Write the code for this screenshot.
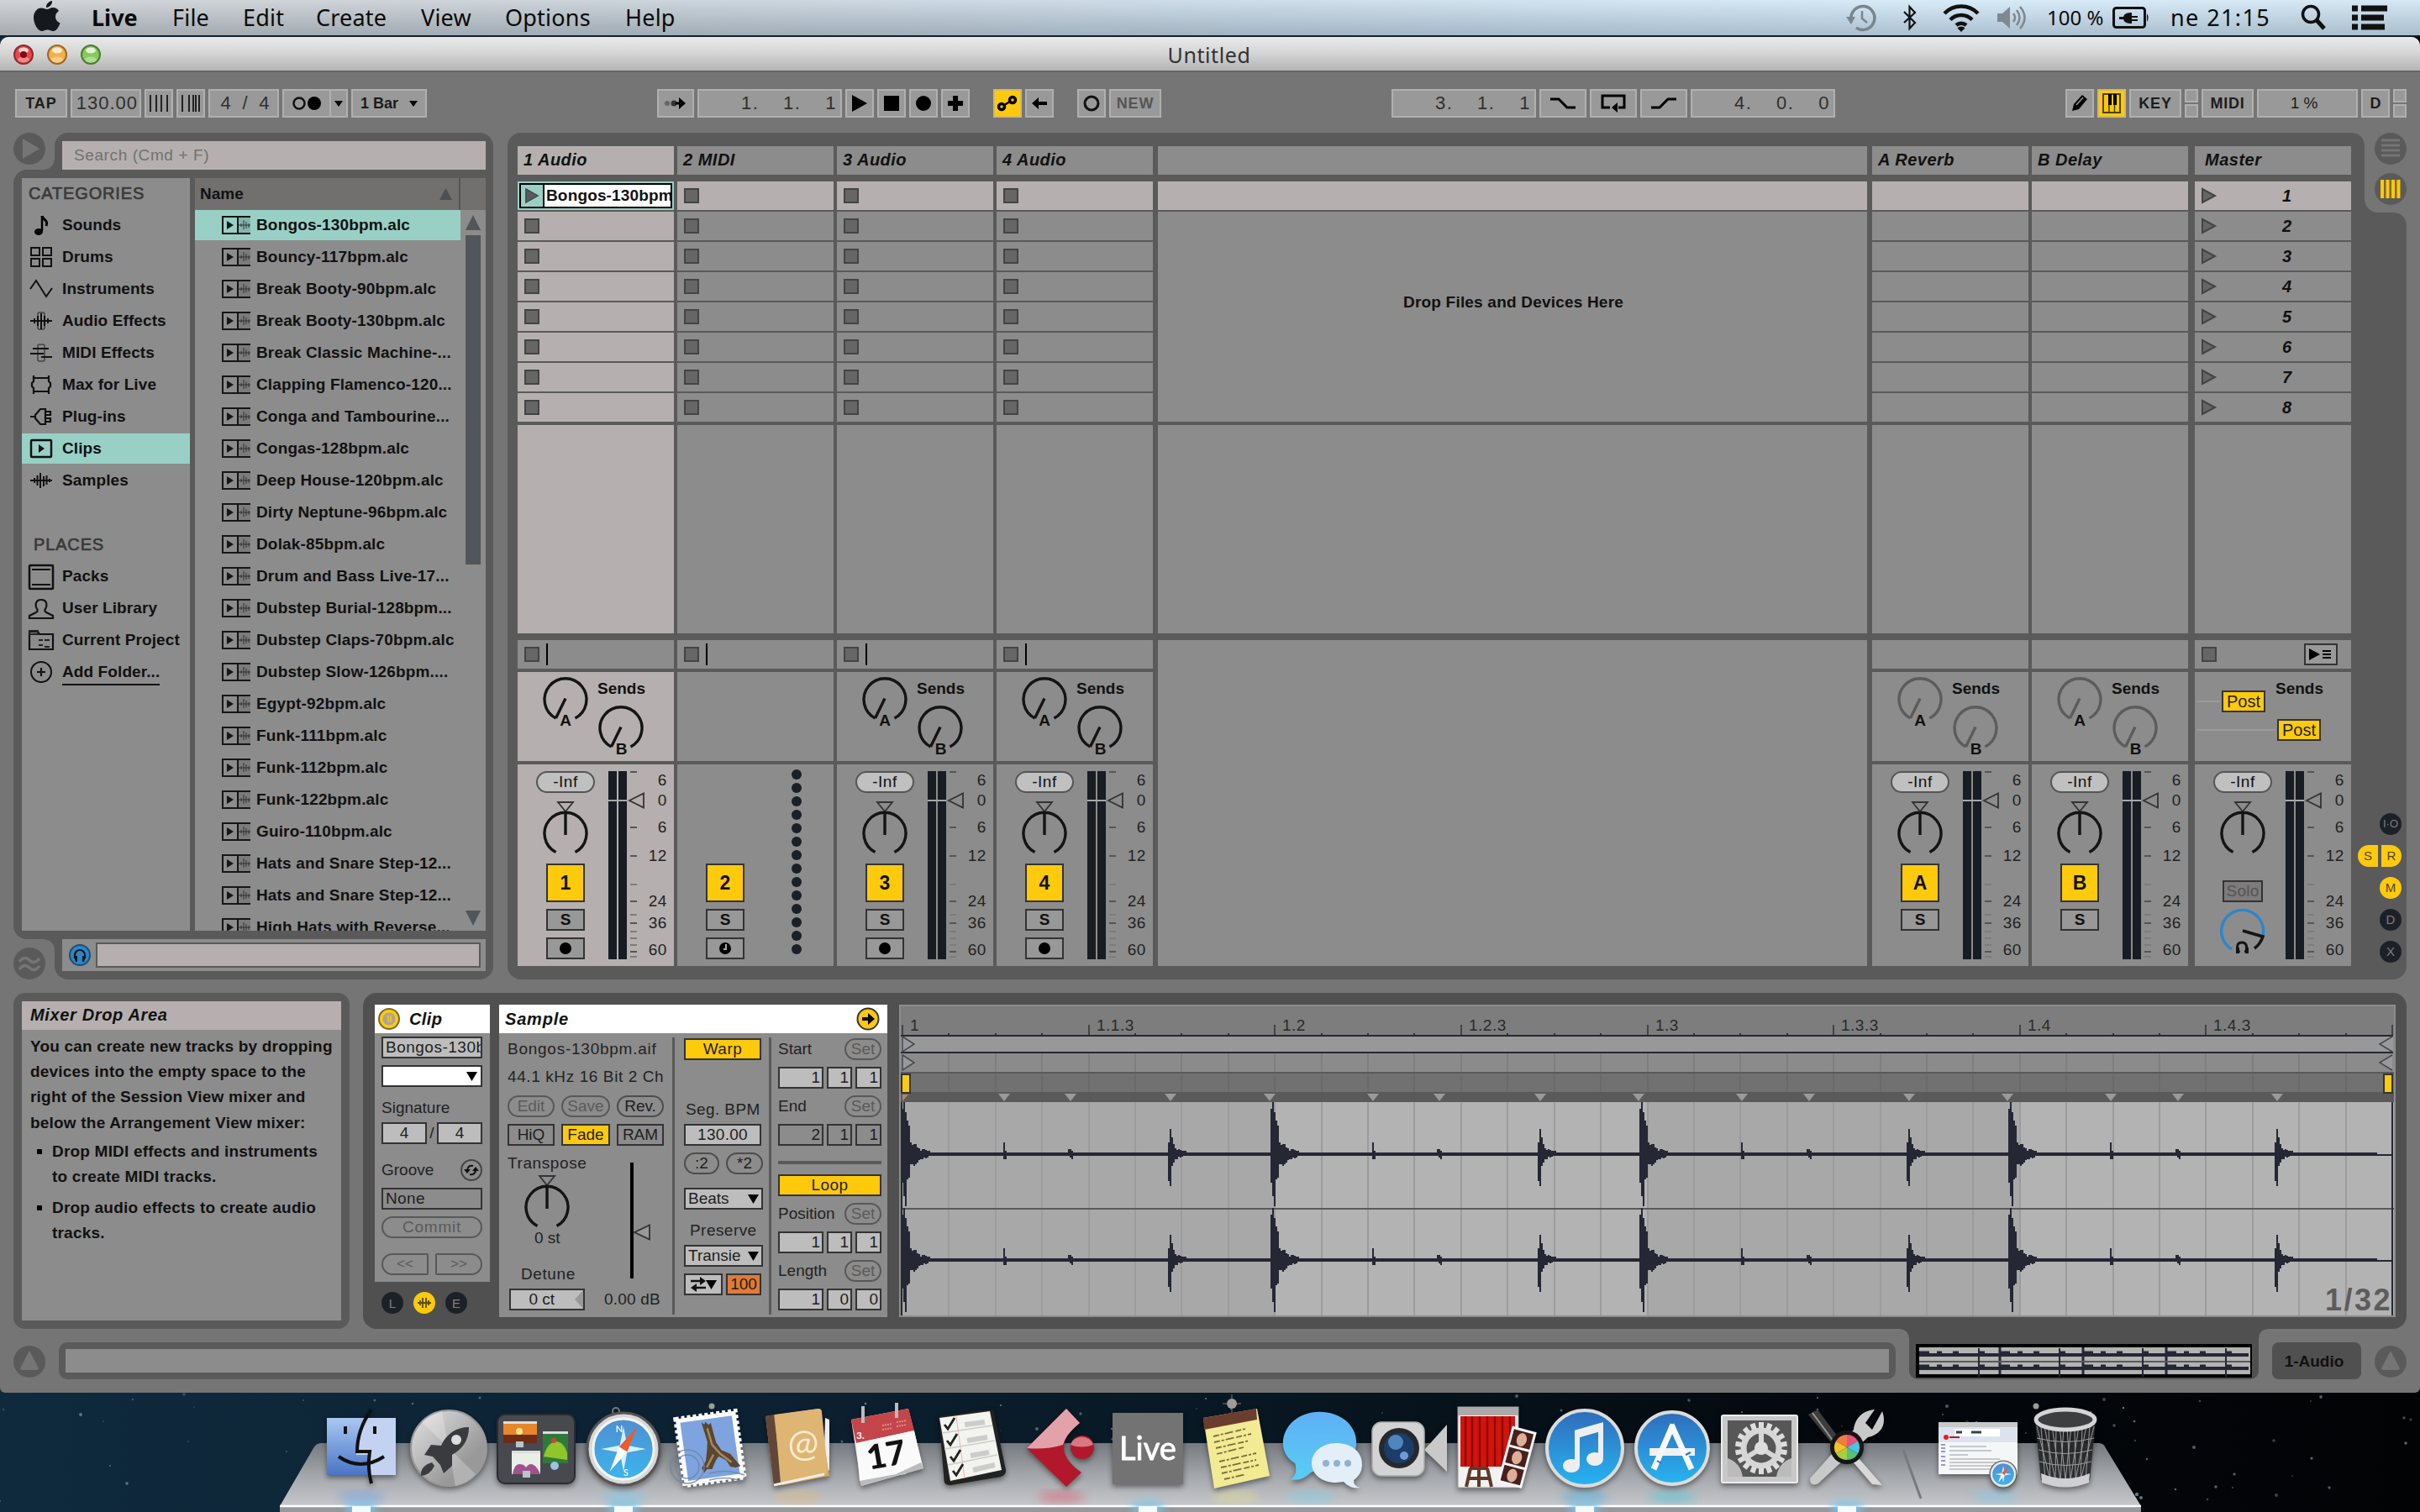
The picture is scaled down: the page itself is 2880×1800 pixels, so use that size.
<!DOCTYPE html>
<html lang="en">
<head>
  <meta charset="UTF-8">
  <meta name="viewport" content="width=device-width, initial-scale=1.0">
  <title>Untitled</title>
  <style>
    html, body {
      margin: 0;
      width: 2880px;
      height: 1800px;
      overflow: hidden;
      background: #050a10;
      font-family: "Liberation Sans", Arial, sans-serif;
      color: #111;
    }
  </style>
</head>
<body>
  <mac-desktop>
    <mac-menubar></mac-menubar>
    <live-window>
      <live-toolbar></live-toolbar>
      <live-main></live-main>
      <live-detail></live-detail>
      <live-status></live-status>
    </live-window>
    <mac-dock></mac-dock>
  </mac-desktop>

  <script>
    // Rules every shadow root starts with
    const BASE = `
      :host, * { box-sizing: border-box; }
      svg { display: block; flex: none; overflow: visible; }
      span, b { white-space: nowrap; }
    `;

    class LiveElement extends HTMLElement {
      constructor() {
        super();
        this.attachShadow({ mode: 'open' });
      }
      connectedCallback() {
        this.shadowRoot.innerHTML = `<style>${BASE}${this.css()}</style>${this.html()}`;
      }
      css() { return ':host { display: block; }'; }
      html() { return '<slot></slot>'; }
    }

    const svg = (w, h, body, box) =>
      `<svg width="${w}" height="${h}" viewBox="${box || `0 0 ${w} ${h}`}" fill="none">${body}</svg>`;

    /* ---------- desktop ---------- */

    class MacDesktop extends LiveElement {
      css() {
        return `
          :host {
            display: flex;
            flex-direction: column;
            width: 2880px;
            height: 1800px;
            overflow: hidden;
            background: linear-gradient(90deg, #0f2a3d 0, #0c2132 900px, #081722 1500px, #04080d 2200px, #020305 2880px);
          }`;
      }
    }

    class MacMenubar extends LiveElement {
      css() {
        return `
          :host {
            display: flex;
            align-items: center;
            height: 44px;
            flex: none;
            border-bottom: 2px solid #10202c;
            background: linear-gradient(rgba(255,255,255,.25), rgba(90,100,110,.28)),
              linear-gradient(90deg, #c2c6ca 0, #bcc6cf 700px, #bed3e4 1500px, #cbe4f6 2300px, #c8e0f0 2880px);
            font: 27px "Noto Sans", "Open Sans", sans-serif;
            color: #0a0a0a;
          }
          .apple { margin: 0 37px 4px 40px; }
          span { flex: none; line-height: 40px; }
          .right { display: flex; align-items: center; margin-left: auto; }
        `;
      }
      html() {
        const items = [['Live', 96], ['File', 84], ['Edit', 87], ['Create', 125], ['View', 100], ['Options', 143], ['Help', 70]];
        return `
          <div class="apple">${svg(32, 38, `<path d="M22 1c.5 4-3 8-7 8-.4-4 3-7.500 7-8zM16 11c2 0 4-2 7-2s5.500 1.500 7 4c-6 4-5 12 1.500 14.500C30 32 27 37 23.500 37c-3 0-3.500-1.500-7-1.500S12.500 37 9.500 37C5 37 0 28 0 21 0 14 4.500 9.500 9 9.500c3 0 5 1.500 7 1.500z" fill="#15191d"/>`)}</div>
          ${items.map(([t, w], i) => `<span style="width:${w}px;${i ? 'letter-spacing:.2px;' : 'font-weight:700;'}">${t}</span>`).join('')}
          <div class="right">
            ${svg(36, 36, `<path d="M6 20A14 14 0 1 1 12 30" stroke="#7b858e" stroke-width="3.500"/><path d="M0 17h11l-5 9z" fill="#7b858e"/><path d="M19 10v9l6 5" stroke="#7b858e" stroke-width="2.500"/>`)}
            <i style="width:32px"></i>
            ${svg(16, 30, `<path d="M1 8l13 13-6.500 7V2L14 9 1 21" stroke="#111" stroke-width="2.200"/>`)}
            <i style="width:31px"></i>
            ${svg(44, 34, `<g stroke="#111" stroke-width="4.500"><path d="M2 12a28 28 0 0 1 40 0"/><path d="M9 19.500a18 18 0 0 1 26 0"/><path d="M16 26a9 9 0 0 1 12 0"/></g><path d="M22 34l-4.500-4.500a6 6 0 0 1 9 0z" fill="#111"/>`)}
            <i style="width:20px"></i>
            ${svg(36, 32, `<path d="M1 11h6l9-8v26l-9-8H1z" fill="#7f8990"/><g stroke="#7f8990" stroke-width="2.600"><path d="M20 11q4 5 0 10"/><path d="M24 7q7 9 0 18"/><path d="M28 3q11 13 0 26"/></g>`)}
            <i style="width:24px"></i>
            <span style="width:78px;font-size:24px">100 %</span>
            ${svg(44, 26, `<rect x="1.500" y="1.500" width="37" height="23" rx="3" stroke="#111" stroke-width="3"/><path d="M41 8q3 5 0 10z" fill="#111"/><path d="M8 12h5c1-4 5-5 10-5v4h7v2h-7v2h7v2h-7v3c-5 0-9-1-10-5H8z" fill="#111"/>`)}
            <i style="width:25px"></i>
            <span style="width:155px;letter-spacing:1.400px">ne 21:15</span>
            ${svg(30, 32, `<circle cx="12" cy="12" r="9.500" stroke="#111" stroke-width="3.500"/><path d="M19 19l9 10" stroke="#111" stroke-width="5"/>`)}
            <i style="width:31px"></i>
            ${svg(42, 30, `<path d="M0 4h7M11 4h31M0 15h7M11 15h27M0 26h7M11 26h28" stroke="#111" stroke-width="7"/>`)}
            <i style="width:39px"></i>
          </div>`;
      }
    }

    class LiveWindow extends LiveElement {
      css() {
        return `
          :host {
            display: flex;
            flex-direction: column;
            height: 1614px;
            flex: none;
            background: #757575;
            border-radius: 10px 10px 6px 6px;
            overflow: hidden;
          }
          header {
            display: grid;
            grid-template-columns: 1fr auto 1fr;
            align-items: center;
            height: 42px;
            flex: none;
            padding: 2px 18px 0 16px;
            background: linear-gradient(#eaeaea, #d4d4d4 50%, #b4b4b4);
            border-bottom: 2px solid #666;
            font: 25px "Noto Sans", sans-serif;
            color: #333;
          }
          .lights { display: flex; gap: 16px; }
        `;
      }
      html() {
        const light = (a, b, dot) => svg(24, 24, `<circle cx="12" cy="12" r="11" fill="${a}" stroke="${b}" stroke-width="2"/><ellipse cx="12" cy="7" rx="6" ry="3.500" fill="#fff" opacity=".75"/><ellipse cx="12" cy="18" rx="7" ry="3.500" fill="#fff" opacity=".35"/>${dot ? '<circle cx="12" cy="12" r="4" fill="#7a0d10"/>' : ''}`);
        return `
          <header>
            <div class="lights">${light('#e8474c', '#8e2a2c', 1)}${light('#f5b04a', '#9a6a26')}${light('#86c95b', '#4d7c35')}</div>
            <span style="letter-spacing:.6px">Untitled</span>
          </header>
          <slot></slot>`;
      }
    }

    /* ---------- control bar ---------- */

    class ToolBox extends LiveElement {
      css() {
        return `
          :host {
            display: flex;
            align-items: center;
            justify-content: center;
            flex: none;
            width: var(--w, 34px);
            height: 34px;
            margin-right: 4px;
            border: 2px solid #b0b0b0;
            background: #999;
            font: bold 18px "Liberation Sans", sans-serif;
            white-space: pre;
            color: #1c1c1c;
          }
          :host([on]) { background: #ffc90c; border-color: #d8b85a; }
          :host([num]) { font: 22px "Liberation Sans", sans-serif; color: #303030; justify-content: flex-end; padding-right: 4px; }
        `;
      }
    }

    class LiveToolbar extends LiveElement {
      css() {
        return `
          :host { display: flex; height: 72px; flex: none; padding: 20px 0 0 18px; }
          .pair { display: flex; flex-direction: column; gap: 2px; width: 16px; margin-right: 4px; }
          .pair i { height: 16px; border: 2px solid #b0b0b0; background: #999; }
        `;
      }
      html() {
        const box = (w, body, attrs = '', style = '') => `<tool-box ${attrs} style="--w:${w}px;${style}">${body}</tool-box>`;
        const bars = xs => svg(24, 24, xs.map(x => `<path d="M${x} 2v20" stroke="#222" stroke-width="2"/>`).join(''));
        const down = `<path d="M0 0h10l-5 7z" fill="#000"/>`;
        const pair = '<div class="pair"><i></i><i></i></div>';
        return `
          ${box(62, 'TAP', '', 'letter-spacing:.9px')}
          ${box(84, '130.00', 'num', 'letter-spacing:1px;padding-right:2px')}
          ${box(34, bars([2, 9, 15, 22]))}
          ${box(34, bars([2, 10, 15, 18, 22]))}
          ${box(84, '4  /  4', 'num', 'padding-right:9px;letter-spacing:.5px')}
          ${box(58, svg(34, 18, '<circle cx="8" cy="9" r="6.500" stroke="#111" stroke-width="2.500"/><circle cx="26" cy="9" r="8" fill="#000"/>'), '', 'margin-right:-2px')}
          ${box(22, svg(10, 7, down))}
          ${box(90, '1 Bar' + svg(10, 7, down), '', 'gap:13px')}
          ${box(44, svg(26, 16, '<circle cx="3" cy="8" r="3" fill="#666"/><circle cx="11" cy="8" r="3.500" fill="#333"/><path d="M13 6.500h4V1l8 7-8 7V9.500h-4z" fill="#000"/>'), '', 'margin-left:270px')}
          ${box(172, '1.   1.   1', 'num', 'word-spacing:2px;letter-spacing:1.500px')}
          ${box(34, svg(20, 20, '<path d="M1 0l18 10L1 20z" fill="#000"/>'))}
          ${box(34, svg(18, 18, '<path d="M0 0h18v18H0z" fill="#000"/>'))}
          ${box(34, svg(18, 18, '<circle cx="9" cy="9" r="9" fill="#000"/>'))}
          ${box(34, svg(18, 18, '<path d="M6 0h6v6h6v6h-6v6H6v-6H0V6h6z" fill="#000"/>'))}
          ${box(34, svg(24, 18, '<circle cx="5" cy="13" r="3.500" stroke="#000" stroke-width="3.500"/><circle cx="18" cy="5" r="3.500" stroke="#000" stroke-width="3.500"/><path d="M8 11l7-4" stroke="#000" stroke-width="2.500"/>'), 'on', 'margin-left:24px')}
          ${box(34, svg(18, 14, '<path d="M0 7l8-7v5h10v4H8v5z" fill="#000"/>'))}
          ${box(34, svg(20, 20, '<circle cx="10" cy="10" r="8" stroke="#111" stroke-width="3"/>'), '', 'margin-left:24px')}
          ${box(62, 'NEW', '', 'color:#555;letter-spacing:.8px')}
          ${box(172, '3.   1.   1', 'num', 'margin-left:270px;word-spacing:2px;letter-spacing:1.500px')}
          ${box(56, svg(30, 14, '<path d="M0 2h10l10 10h10" stroke="#000" stroke-width="3"/>'))}
          ${box(56, svg(28, 22, '<path d="M10 16H1V2h26v14h-7" stroke="#000" stroke-width="3"/><path d="M12 16l7-6v12z" fill="#000"/>'))}
          ${box(56, svg(30, 14, '<path d="M0 12h10L20 2h10" stroke="#000" stroke-width="3"/>'))}
          ${box(172, '4.   0.   0', 'num', 'word-spacing:2px;letter-spacing:1.500px')}
          ${box(34, svg(22, 22, '<path d="M2 20l2-8L14 1l6 5-10 12z" fill="#000"/><path d="M7 13l8-9" stroke="#999" stroke-width="1.500"/>'), '', 'margin-left:270px')}
          ${box(34, svg(22, 24, '<rect x="1" y="1" width="20" height="22" stroke="#4d3d05" stroke-width="2"/><path d="M8 1v22M14.500 1v22" stroke="#4d3d05" stroke-width="1.500"/><path d="M7 1h4v13H7zM13 1h4v13h-4z" fill="#000"/>'), 'on')}
          ${box(62, 'KEY', '', 'letter-spacing:.8px')}
          ${pair}
          ${box(62, 'MIDI', '', 'letter-spacing:.7px')}
          ${box(120, '1 %', '', 'font-weight:400;font-size:19px;padding-right:8px')}
          ${box(34, 'D')}
          ${pair}`;
      }
    }

    /* ---------- round buttons at the window edges ---------- */

    class EdgeButton extends LiveElement {
      css() {
        return `
          :host {
            display: flex;
            align-items: center;
            justify-content: center;
            width: 38px;
            height: 38px;
            border-radius: 50%;
            flex: none;
            background: #5a5a5a;
          }`;
      }
      html() {
        const kinds = {
          play: '<path d="M11 7l20 12-20 12z" fill="#757575"/>',
          up: '<path d="M19 6l11 21a3 3 0 0 1-2 2H10a3 3 0 0 1-2-2z" fill="#757575"/>',
          groove: '<g stroke="#757575" stroke-width="3.500"><path d="M7 17q6-8 12-2t12-2"/><path d="M7 26q6-8 12-2t12-2"/></g>',
          arrange: '<path d="M8 9h22M8 15h22M8 21h22M8 27h22" stroke="#757575" stroke-width="3"/>',
          session: '<path d="M9 8v22M15.500 8v22M22 8v22M28.500 8v22" stroke="#ffc90c" stroke-width="4"/><path d="M12.300 8v22M18.800 8v22M25.300 8v22" stroke="#8a7220" stroke-width="1.500"/>',
        };
        return svg(38, 38, kinds[this.getAttribute('kind')]);
      }
    }

    /* ---------- browser ---------- */

    const ICONS = {
      Sounds: '<path d="M15 3v18" stroke="#000" stroke-width="2.500"/><ellipse cx="11" cy="22" rx="5" ry="4" fill="#000"/><path d="M15 3c1 5 8 5 5 12" stroke="#000" stroke-width="3"/>',
      Drums: '<g stroke="#111" stroke-width="2"><rect x="2" y="3" width="10" height="9"/><rect x="16" y="3" width="10" height="9"/><rect x="2" y="16" width="10" height="9"/><rect x="16" y="16" width="10" height="9"/></g>',
      Instruments: '<path d="M1 14L8 4l12 19 7-10" stroke="#111" stroke-width="2"/>',
      'Audio Effects': '<rect x="10" y="4" width="8" height="20" rx="2" stroke="#444" stroke-width="1.500"/><path d="M1 14h26M6 11v6M10 8v12M14 5v19M18 8v12M22 11v6" stroke="#111" stroke-width="2"/>',
      'MIDI Effects': '<rect x="10" y="4" width="8" height="20" rx="2" stroke="#444" stroke-width="1.500"/><path d="M4 9h19M1 15h16M14 19h13" stroke="#111" stroke-width="2.200"/>',
      'Max for Live': '<path d="M5 6h18v4l2 2v4l-2 2v4H5v-4l-2-2v-4l2-2zM5 3v4M23 3v4M5 21v4M23 21v4" stroke="#111" stroke-width="2.200"/>',
      'Plug-ins': '<path d="M19 5h-6l-6 7v4l6 7h6zM1 14h6M19 8h6v4h-6M19 16h6v4h-6" stroke="#111" stroke-width="2.200"/>',
      Clips: '<rect x="2" y="4" width="24" height="20" rx="1" stroke="#111" stroke-width="2.500"/><path d="M11 9l7 5-7 5z" fill="#111"/>',
      Samples: '<path d="M1 14h26M6 11v6M9.500 8v12M13 5v18M17 9v12M20.500 8v11M24 12v4" stroke="#111" stroke-width="2"/>',
      Packs: '<rect x="0" y="1" width="28" height="28" rx="1" stroke="#111" stroke-width="2.500"/><path d="M3 6h22M3 24h22" stroke="#111" stroke-width="2"/>',
      'User Library': '<path d="M0 26v-3l8-4c2-1 2-3 1-4-2-3-3-11 5-11s7 8 5 11c-1 1-1 3 1 4l8 4v3z" stroke="#111" stroke-width="2.200"/>',
      'Current Project': '<path d="M0 25V4h10l2 3h16v18z" stroke="#111" stroke-width="2.200"/><path d="M0 3h10v4H0zM11 14h5M18 14h6M11 20h5M18 22h6" stroke="#222" stroke-width="2"/>',
      'Add Folder...': '<circle cx="14" cy="14" r="12" stroke="#111" stroke-width="2"/><path d="M14 9v10M9 14h10" stroke="#111" stroke-width="2.200"/>',
    };

    class BrowserRow extends LiveElement {
      css() {
        return `
          :host { display: flex; align-items: center; height: 36px; margin-bottom: 2px; flex: none; gap: 11px; padding-left: 9px; letter-spacing: .1px; }
          :host([selected]) { background: #98d0c6; }
          :host([file]) { padding-left: 32px; gap: 7px; width: 316px; letter-spacing: .15px; }
        `;
      }
      html() {
        const name = this.getAttribute('name');
        const icon = this.hasAttribute('file')
          ? svg(34, 22, '<path d="M19 1h15v20H19z" fill="#000" opacity=".12"/><path d="M34 1H1v20h33M19 1v20" stroke="#161616" stroke-width="2"/><path d="M6 6l8 5-8 5z" fill="#161616"/><path d="M20 11h14M23 9v4M26 5v11M29 7v8M32 9v5" stroke="#333" stroke-width="1"/>')
          : svg(28, 28, ICONS[name]);
        const line = name === 'Add Folder...' ? 'border-bottom:2px solid #111;padding-bottom:3px;margin-top:5px;' : '';
        return `${icon}<span style="${line}">${name}</span>`;
      }
    }

    class LiveBrowser extends LiveElement {
      css() {
        return `
          :host { display: flex; flex-direction: column; width: 571px; height: 1008px; flex: none; font: bold 19px "Liberation Sans", sans-serif; }
          .end { display: flex; justify-content: space-between; }
          .cap { width: 522px; background: #5a5a5a; padding: 0 9px; position: relative; }
          .top .cap { height: 44px; padding-top: 10px; border-radius: 16px 16px 0 0; }
          .bottom .cap { height: 48px; border-radius: 0 0 16px 16px; }
          .cap::before { content: ""; position: absolute; left: -12px; width: 12px; height: 12px; }
          .top .cap::before { bottom: 0; background: radial-gradient(circle at 0 0, #0000 11px, #5a5a5a 12px); }
          .bottom .cap::before { top: 0; background: radial-gradient(circle at 0 100%, #0000 11px, #5a5a5a 12px); }
          .search { height: 34px; line-height: 34px; padding-left: 14px; background: #b5b0af; color: #707070; font-weight: 400; font-size: 19px; letter-spacing: .6px; }
          .mid { display: flex; gap: 6px; height: 916px; padding: 10px 9px 10px 10px; background: #5a5a5a; border-radius: 16px 0 0 16px; }
          .cats { width: 200px; background: #8c8c8c; overflow: hidden; }
          h3 { margin: 0; font: 20px/37px "Liberation Sans", sans-serif; color: #3a3a3a; letter-spacing: .85px; padding-left: 8px; height: 38px; -webkit-text-stroke: .7px #3a3a3a; }
          .files { width: 346px; background: #8c8c8c; display: flex; flex-direction: column; overflow: hidden; }
          .head { display: flex; align-items: center; height: 38px; flex: none; background: #71706f; padding-left: 6px; }
          .head i { margin-left: auto; display: flex; align-items: center; width: 32px; height: 38px; border-right: 2px solid #555; margin-right: 30px; padding-left: 7px; }
          .body { display: flex; flex: 1; min-height: 0; }
          .scroll { width: 18px; margin-left: 6px; display: flex; flex-direction: column; padding: 6px 0; }
          .thumb { width: 18px; height: 392px; margin: 6px 0 auto; background: #50565a; }
          .preview { display: flex; align-items: center; gap: 6px; width: 504px; height: 38px; background: #8c8c8c; padding: 0 6px 0 8px; }
          .wave { flex: 1; height: 30px; background: #b5b0af; border: 2px solid #5a5a5a; }
        `;
      }
      html() {
        const cats = ['Sounds', 'Drums', 'Instruments', 'Audio Effects', 'MIDI Effects', 'Max for Live', 'Plug-ins', 'Clips', 'Samples'];
        const places = ['Packs', 'User Library', 'Current Project', 'Add Folder...'];
        const files = ['Bongos-130bpm.alc', 'Bouncy-117bpm.alc', 'Break Booty-90bpm.alc', 'Break Booty-130bpm.alc', 'Break Classic Machine-...',
          'Clapping Flamenco-120...', 'Conga and Tambourine...', 'Congas-128bpm.alc', 'Deep House-120bpm.alc', 'Dirty Neptune-96bpm.alc',
          'Dolak-85bpm.alc', 'Drum and Bass Live-17...', 'Dubstep Burial-128bpm...', 'Dubstep Claps-70bpm.alc', 'Dubstep Slow-126bpm....',
          'Egypt-92bpm.alc', 'Funk-111bpm.alc', 'Funk-112bpm.alc', 'Funk-122bpm.alc', 'Guiro-110bpm.alc', 'Hats and Snare Step-12...',
          'Hats and Snare Step-12...', 'High Hats with Reverse...'];
        const row = (n, a = '') => `<browser-row name="${n}" ${a}></browser-row>`;
        return `
          <div class="end top"><edge-button kind="play"></edge-button><div class="cap"><div class="search">Search (Cmd + F)</div></div></div>
          <div class="mid">
            <div class="cats">
              <h3>CATEGORIES</h3>
              ${cats.map(n => row(n, n === 'Clips' ? 'selected' : '')).join('')}
              <h3 style="margin-top:40px;padding-left:14px">PLACES</h3>
              ${places.map(n => row(n)).join('')}
            </div>
            <div class="files">
              <div class="head"><span>Name</span><i>${svg(15, 14, '<path d="M7.500 0L15 14H0z" fill="#4c5052"/>')}</i></div>
              <div class="body">
                <div>${files.map((n, i) => row(n, 'file' + (i ? '' : ' selected'))).join('')}</div>
                <div class="scroll">${svg(18, 18, '<path d="M9 0l9 18H0z" fill="#50565a"/>')}<div class="thumb"></div>${svg(18, 18, '<path d="M0 0h18L9 18z" fill="#50565a"/>')}</div>
              </div>
            </div>
          </div>
          <div class="end bottom" style="align-items:flex-end"><edge-button kind="groove"></edge-button><div class="cap"><div class="preview">
            ${svg(26, 26, '<circle cx="13" cy="13" r="12" fill="#2b86c9" stroke="#1c4f78" stroke-width="2"/><path d="M7 17v-4a6 6 0 0 1 12 0v4" stroke="#111" stroke-width="2.200"/><path d="M6 14h4v7H8zM20 14h-4v7h2z" fill="#111"/>')}
            <div class="wave"></div></div></div></div>`;
      }
    }

    /* ---------- session view ---------- */

    const knob = (color, needle) => `
      <path d="M-11.500 22.500A25 25 0 1 1 11.500 22.500" stroke="${color}" stroke-width="3.400"/>
      <path d="${needle}" stroke="${color}" stroke-width="3.400"/>`;

    class TrackMeter extends LiveElement {
      html() {
        const tick = (y, c) => `<path d="M26 ${y}h8" stroke="${c}" stroke-width="2"/>`;
        const label = (t, y) => `<text x="69.500" y="${y + 6}" text-anchor="end" font-family="Liberation Sans" font-weight="400" font-size="19" letter-spacing=".3" fill="#222">${t}</text>`;
        return svg(78, 240, `
          <path d="M0 8h10v224H0zM12 8h10v224H12z" fill="#181d24"/>
          <path d="M0 43h22" stroke="#a8a8a8" stroke-width="2"/>
          <path d="M25 43l17-8.500v17z" stroke="#333" stroke-width="1.800"/>
          ${[9, 75, 109, 163, 189, 223].map(y => tick(y, '#555')).join('')}
          ${[143, 179, 199, 207, 215, 229].map(y => tick(y, '#7c7c7c')).join('')}
          ${[['6', 19], ['0', 43], ['6', 75], ['12', 109], ['24', 163], ['36', 189], ['60', 221]].map(l => label(...l)).join('')}`);
      }
    }

    class TrackStrip extends LiveElement {
      css() {
        return `
          :host { display: flex; flex-direction: column; width: 186px; flex: none; font: bold 18px "Liberation Sans", sans-serif; --bg: #8c8c8c; }
          :host([selected]) { --bg: #b5b0af; }
          :host([kind="master"]) .name { padding-left: 12px; }
          .name, .slot, .blank, .sends, .mixer { background: var(--bg); }
          .name { height: 34px; margin-bottom: 8px; padding-left: 7px; font: italic bold 20px/33px "Liberation Sans", sans-serif; letter-spacing: .5px; }
          .slot { display: flex; align-items: center; height: 34px; margin-bottom: 2px; padding-left: 8px; }
          .slot.first { background: #b5b0af; }
          .sq { width: 18px; height: 18px; background: #666; border: 2px solid #444; }
          .blank { height: 248px; margin: 2px 0 8px; }
          .stop { display: flex; align-items: center; height: 34px; margin-bottom: 4px; padding: 0 16px 0 8px; background: #8c8c8c; }
          .stop .bar { width: 2px; height: 26px; margin-left: 8px; background: #000; }
          .sends { height: 106px; margin-bottom: 4px; }
          .mixer { display: flex; height: 240px; }
          .ctl { display: flex; flex-direction: column; align-items: center; width: 108px; padding: 8px 0 0 6px; }
          .pill { width: 70px; height: 26px; border: 2px solid #555; border-radius: 13px; background: #c0c0c0; font: 19px/22px "Liberation Sans", sans-serif; text-align: center; letter-spacing: .5px; }
          .num { width: 46px; height: 46px; margin: 12px 0 8px; border: 2px solid #333; background: #ffc90c; font-size: 23px; line-height: 42px; text-align: center; }
          .btn { display: flex; align-items: center; justify-content: center; width: 46px; height: 26px; margin-bottom: 8px; border: 2px solid #333; background: #989898; font-size: 19px; }
          .clip { padding: 2px; background: #98d0c6; }
          .clip > div { display: flex; align-items: center; width: 182px; height: 30px; border: 2px solid #000; background: #fff; overflow: hidden; font-size: 19px; letter-spacing: .15px; }
          .clip svg { padding: 3px 4px; width: 28px; height: 26px; background: #98d0c6; border-right: 2px solid #000; margin-right: 2px; }
          .scene { justify-content: flex-start; font-style: italic; font-size: 20px; }
          .scene b { width: 80px; margin-left: 46px; text-align: center; padding-right: 5px; }
        `;
      }
      slot(i) {
        const kind = this.getAttribute('kind');
        const cls = i ? '' : 'first';
        if (kind === 'master') return `<div class="slot scene ${cls}">${svg(18, 20, '<path d="M1 2l15 8-15 8z" fill="#666" stroke="#444" stroke-width="2"/>')}<b>${i + 1}</b></div>`;
        if (kind === 'return') return `<div class="slot ${cls}"></div>`;
        if (!i && this.hasAttribute('selected')) {
          return `<div class="slot clip"><div>${svg(20, 20, '<path d="M2 1l16 9-16 9z" fill="#5a5a5a" stroke="#444" stroke-width="1.500"/>')}<span>Bongos-130bpm</span></div></div>`;
        }
        return `<div class="slot ${cls}"><div class="sq"></div></div>`;
      }
      sends() {
        const kind = this.getAttribute('kind');
        if (kind === 'midi') return '';
        const text = (t, x, y, anchor = 'middle', fs = 19) => `<text x="${x}" y="${y}" text-anchor="${anchor}" font-family="Liberation Sans" font-weight="700" font-size="${fs}" fill="#111">${t}</text>`;
        if (kind === 'master') {
          const post = (x, y) => `<rect x="${x + 1}" y="${y + 1}" width="50" height="24" fill="#ffc90c" stroke="#333" stroke-width="2"/><text x="${x + 26}" y="${y + 20}" text-anchor="middle" font-family="Liberation Sans" font-weight="400" font-size="20" fill="#222">Post</text>`;
          return svg(186, 106, `<path d="M2 35h28M2 69h94" stroke="#9b9b9b" stroke-width="2"/>${post(32, 22)}${post(98, 56)}${text('Sends', 96, 26, 'start')}`);
        }
        const c = kind === 'return' ? '#5c5c5c' : '#141414';
        const k = knob(c, 'M0-1L-11.500 22.500');
        return svg(186, 106, `<g transform="translate(57 32.500)">${k}</g><g transform="translate(123 66.500)">${k}</g>
          ${text('A', 57, 64)}${text('B', 123.500, 98)}${text('Sends', 95, 26, 'start')}`);
      }
      controls() {
        const kind = this.getAttribute('kind');
        const num = this.getAttribute('num');
        const pan = svg(60, 62, `<path d="M21 1h18l-9 11z" stroke="#333" stroke-width="1.800"/><g transform="translate(30 38)">${knob('#141414', 'M0-25V2')}</g>`);
        const vol = `<div class="pill">-Inf</div><div style="margin-top:10px">${pan}</div>`;
        const solo = '<div class="btn">S</div>';
        const rec = `<div class="btn">${svg(14, 14, '<circle cx="7" cy="7" r="7" fill="#000"/>')}</div>`;
        const midi = `<div class="btn">${svg(14, 14, '<circle cx="7" cy="7" r="7" fill="#000"/><path d="M8 2v6H5" stroke="#aaa" stroke-width="2"/>')}</div>`;
        if (kind === 'midi') return `<div style="height:98px"></div><div class="num">${num}</div>${solo}${midi}`;
        if (kind === 'return') return `${vol}<div class="num">${num}</div>${solo}`;
        if (kind === 'master') {
          return `${vol}<div class="btn" style="width:48px;margin-top:32px;color:#555;background:#7d7b7b;font-weight:400;letter-spacing:.2px">Solo</div>
            ${svg(60, 60, `<g transform="translate(30 26)"><path d="M-13 22A25 25 0 1 1 24 6" stroke="#2b86cc" stroke-width="3.400"/><path d="M0 0l24 7q-3 9-10 14" stroke="#141414" stroke-width="3.500"/><path d="M-4 26c-4-6-3-12 3-12s7 6 4 12" stroke="#141414" stroke-width="3"/><path d="M-6 20v7M5 20v7" stroke="#141414" stroke-width="4"/></g>`)}`;
        }
        return `${vol}<div class="num">${num}</div>${solo}${rec}`;
      }
      html() {
        const kind = this.getAttribute('kind');
        const stop = {
          return: '',
          master: `<div class="sq"></div>${svg(40, 26, '<rect x="1" y="1" width="38" height="24" fill="#999" stroke="#333" stroke-width="2"/><path d="M6 6l13 7-13 7zM22 8h10v2H22zM22 12h10v2H22zM22 16h10v2H22z" fill="#000"/>').replace('<svg', '<svg style="margin-left:auto"')}`,
        };
        const dots = svg(78, 240, Array.from({ length: 14 }, (_, i) => `<circle cx="34" cy="${12 + i * 16}" r="6" fill="#1a2027"/>`).join(''));
        return `
          <div class="name">${this.getAttribute('name')}</div>
          ${Array.from({ length: 8 }, (_, i) => this.slot(i)).join('')}
          <div class="blank"></div>
          <div class="stop">${kind in stop ? stop[kind] : '<div class="sq"></div><div class="bar"></div>'}</div>
          <div class="sends">${this.sends()}</div>
          <div class="mixer"><div class="ctl">${this.controls()}</div>${kind === 'midi' ? dots : '<track-meter></track-meter>'}</div>`;
      }
    }

    class DropArea extends LiveElement {
      css() {
        return `
          :host { display: flex; flex-direction: column; width: 844px; margin: 0 6px; flex: none; font: bold 19px "Liberation Sans", sans-serif; letter-spacing: .2px; }
          div { background: #8c8c8c; }
          .drop { height: 250px; margin-bottom: 4px; padding: 97px 0 0 2px; text-align: center; }
        `;
      }
      html() {
        return `
          <div style="height:34px;margin-bottom:8px"></div>
          <div style="height:34px;margin-bottom:2px;background:#b5b0af"></div>
          <div class="drop">Drop Files and Devices Here</div>
          <div style="height:248px;margin-bottom:8px"></div>
          <div style="height:388px"></div>`;
      }
    }

    class LiveSession extends LiveElement {
      css() {
        return `
          :host { display: flex; width: 2260px; height: 1008px; margin-left: 17px; padding: 16px 0 0 12px; background: #5a5a5a; border-radius: 16px; }
          .tracks { display: flex; }
          .side { display: flex; flex-direction: column; align-items: flex-end; width: 66px; margin-top: -16px; }
          .notch { position: relative; display: flex; flex-direction: column; gap: 10px; align-items: center; width: 50px; height: 95px; padding-left: 12px; background: #757575; border-radius: 0 0 0 16px; }
          .notch::before { content: ""; position: absolute; left: -14px; top: 0; width: 14px; height: 14px; background: radial-gradient(circle at 0 100%, #0000 13px, #757575 14px); }
          .notch::after { content: ""; position: absolute; right: 0; bottom: -14px; width: 14px; height: 14px; background: radial-gradient(circle at 0 100%, #0000 13px, #757575 14px); }
          .views { display: flex; flex-direction: column; align-items: flex-end; gap: 12px; padding-right: 6px; margin-top: 715px; }
          .views b { width: 26px; height: 26px; border-radius: 13px; background: #1c2128; color: #7d7d7d; font: 15px/26px "Liberation Sans", sans-serif; text-align: center; }
          .views .on { background: #ffc90c; color: #4c4634; }
          .sr { display: flex; gap: 4px; }
          .sr b { width: 24px; }
        `;
      }
      html() {
        const strip = (name, kind, num, extra = '') => `<track-strip name="${name}" kind="${kind}" num="${num}" ${extra}></track-strip>`;
        return `
          <div class="tracks">
            ${strip('1 Audio', 'audio', '1', 'selected style="margin-right:4px"')}
            ${strip('2 MIDI', 'midi', '2', 'style="margin-right:4px"')}
            ${strip('3 Audio', 'audio', '3', 'style="margin-right:4px"')}
            ${strip('4 Audio', 'audio', '4')}
            <drop-area></drop-area>
            ${strip('A Reverb', 'return', 'A', 'style="margin-right:4px"')}
            ${strip('B Delay', 'return', 'B', 'style="margin-right:8px"')}
            ${strip('Master', 'master', '')}
          </div>
          <div class="side">
            <div class="notch"><edge-button kind="arrange"></edge-button><edge-button kind="session"></edge-button></div>
            <div class="views">
              <b style="font-size:13px">I·O</b>
              <div class="sr"><b class="on" style="border-radius:13px 0 0 13px">S</b><b class="on" style="border-radius:0 13px 13px 0">R</b></div>
              <b class="on">M</b><b>D</b><b>X</b>
            </div>
          </div>`;
      }
    }

    class LiveMain extends LiveElement {
      css() { return ':host { display: flex; height: 1024px; flex: none; padding-left: 16px; }'; }
      html() { return '<live-browser></live-browser><live-session></live-session>'; }
    }

    /* ---------- detail view ---------- */

    class LiveField extends LiveElement {
      css() {
        return `
          :host {
            display: flex;
            align-items: center;
            justify-content: center;
            flex: none;
            width: var(--w, 120px);
            height: 26px;
            overflow: hidden;
            border: 2px solid #333;
            background: #bdbdbd;
            font: 19px "Liberation Sans", sans-serif;
            color: #1e1e1e;
            white-space: nowrap;
          }
          :host([flat]) { background: #8c8c8c; }
          :host([on]) { background: #ffc90c; }
          :host([pill]) { border-radius: 13px; border-color: #4c4c4c; background: #8c8c8c; }
          :host([off]) { color: #5a5a5a; border-color: #585858; }
          :host([left]) { justify-content: flex-start; padding: 0 3px; }
          :host([right]) { justify-content: flex-end; padding-right: 2px; }
        `;
      }
    }

    const field = (w, body, attrs = '', style = '') => `<live-field ${attrs} style="--w:${w}px;${style}">${body}</live-field>`;
    const arrow = svg(13, 11, '<path d="M0 0h13L6.500 11z" fill="#000"/>');

    class InfoView extends LiveElement {
      css() {
        return `
          :host { display: block; width: 400px; height: 400px; padding: 10px; border-radius: 14px; background: #5a5a5a; font: bold 19px/30.200px "Liberation Sans", sans-serif; }
          h2 { margin: 0; height: 34px; padding-left: 10px; background: #b5b0af; font: italic bold 20px/33px "Liberation Sans", sans-serif; letter-spacing: .65px; }
          .text { height: 346px; padding: 5px 0 0 10px; background: #8c8c8c; white-space: nowrap; letter-spacing: .2px; }
          ul { margin: 4px 0 0; padding: 0 0 0 26px; list-style: none; }
          li { position: relative; margin-bottom: 6.500px; }
          li::before { content: ""; position: absolute; left: -18px; top: 12px; width: 6px; height: 6px; background: #000; }
        `;
      }
      html() {
        return `
          <h2>Mixer Drop Area</h2>
          <div class="text">You can create new tracks by dropping<br>devices into the empty space to the<br>right of the Session View mixer and<br>below the Arrangement View mixer:
            <ul><li>Drop MIDI effects and instruments<br>to create MIDI tracks.</li><li>Drop audio effects to create audio<br>tracks.</li></ul>
          </div>`;
      }
    }

    class ClipBox extends LiveElement {
      css() {
        return `
          :host { display: flex; flex-direction: column; width: 137px; flex: none; font: 19px "Liberation Sans", sans-serif; color: #222; }
          header { display: flex; align-items: center; gap: 11px; height: 34px; padding-left: 4px; background: #fff; font: italic bold 20px "Liberation Sans", sans-serif; color: #111; letter-spacing: .4px; }
          .body { display: flex; flex-direction: column; height: 296px; padding: 4px 9px 0 8px; background: #8c8c8c; }
          .row { display: flex; align-items: center; justify-content: space-between; }
          .tabs { display: flex; gap: 12px; padding: 12px 0 0 8px; }
        `;
      }
      html() {
        const tab = (t, on) => svg(26, 26, `<circle cx="13" cy="13" r="13" fill="${on ? '#ffc90c' : '#1c2128'}"/>${on ? '<path d="M5 13h16M8 10v6M11 7v12M15 7v12M18 10v6" stroke="#5a4a10" stroke-width="1.800"/>' : `<text x="13" y="18.500" text-anchor="middle" font-family="Liberation Sans" font-size="15" fill="#808080">${t}</text>`}`);
        return `
          <header>${svg(26, 26, '<circle cx="13" cy="13" r="12" fill="#ffc90c" stroke="#7a6a30" stroke-width="2"/><circle cx="13" cy="13" r="7.500" fill="#aaa59a"/><path d="M12 9v8M15 9v8" stroke="#ffc90c" stroke-width="1.500"/>')}Clip</header>
          <div class="body">
            ${field(120, 'Bongos-130b', 'left', 'letter-spacing:.5px')}
            ${field(120, arrow, 'right', 'background:#fff;margin-top:8px;padding-right:4px')}
            <span style="margin:14px 0 6px;line-height:22px">Signature</span>
            <div class="row">${field(54, '4')}/${field(54, '4')}</div>
            <div class="row" style="margin:18px 0 8px;height:26px"><span>Groove</span>${svg(26, 26, '<circle cx="13" cy="13" r="12" stroke="#444" stroke-width="2"/><path d="M8 14c0-5 3-7 7-6M18 12c0 5-3 7-7 6" stroke="#111" stroke-width="2.200"/><path d="M4 12h8l-4 5zM22 14h-8l4-5z" fill="#111"/>')}</div>
            ${field(120, 'None', 'flat left', 'letter-spacing:.4px')}
            ${field(120, 'Commit', 'pill off', 'margin:8px 0 18px;letter-spacing:.8px')}
            <div class="row">${field(56, '&lt;&lt;', 'pill off', 'border-radius:13px 2px 2px 13px;font-size:17px')}${field(56, '&gt;&gt;', 'pill off', 'border-radius:2px 13px 13px 2px;font-size:17px')}</div>
          </div>
          <div class="tabs">${tab('L')}${tab('', 1)}${tab('E')}</div>`;
      }
    }

    class SampleBox extends LiveElement {
      css() {
        return `
          :host { display: flex; flex-direction: column; width: 462px; height: 372px; margin-left: 11px; flex: none; font: 19px "Liberation Sans", sans-serif; color: #222; background: #8c8c8c; }
          header { display: flex; align-items: center; justify-content: space-between; height: 34px; flex: none; padding: 0 9px 0 7px; background: #fff; font: italic bold 20px "Liberation Sans", sans-serif; color: #111; letter-spacing: .8px; }
          .cols { display: flex; flex: 1; }
          .col { display: flex; flex-direction: column; padding-top: 6px; flex: none; }
          .row { display: flex; align-items: center; justify-content: space-between; height: 26px; margin-bottom: 8px; flex: none; }
          .line { width: 3px; margin: 5px 0 3px; background: #5a5a5a; flex: none; }
          .pitch { display: flex; height: 149px; }
          .pitch .l { width: 146px; display: flex; flex-direction: column; }
        `;
      }
      html() {
        const boxes = (a, b, c, flat = '') => `<div class="row">${field(54, a, 'right ' + flat)}${field(30, b, 'right ' + flat)}${field(31, c, 'right ' + flat)}</div>`;
        const label = t => `<div class="row"><span>${t}</span>${field(44, 'Set', 'pill off', 'font-size:19px')}</div>`;
        return `
          <header>Sample${svg(28, 28, '<circle cx="14" cy="14" r="12.500" fill="#ffc90c" stroke="#333" stroke-width="2"/><path d="M7 12h7V7l8 7-8 7v-5H7z" fill="#000"/>')}</header>
          <div class="cols">
            <div class="col" style="width:206px;padding-left:10px">
              <div class="row" style="letter-spacing:.75px"><span>Bongos-130bpm.aif</span></div>
              <div class="row"><span style="letter-spacing:.6px;margin-top:-3px">44.1 kHz 16 Bit 2 Ch</span></div>
              <div class="row" style="width:186px">${field(56, 'Edit', 'pill off')}${field(58, 'Save', 'pill off')}${field(56, 'Rev.', 'pill')}</div>
              <div class="row" style="width:186px">${field(56, 'HiQ', 'flat')}${field(58, 'Fade', 'on')}${field(56, 'RAM', 'flat')}</div>
              <div class="pitch">
                <div class="l"><span style="margin-top:2px;letter-spacing:.6px">Transpose</span>
                  ${svg(94, 64, `<path d="M38 4h18l-9 11z" stroke="#333" stroke-width="1.800"/><g transform="translate(47 41)">${knob('#141414', 'M0-25V2')}</g>`)}
                  <span style="margin:5px 0 0 32px;line-height:18px">0 st</span>
                  <span style="margin:23px 0 0 16px;letter-spacing:.6px">Detune</span></div>
                ${svg(26, 140, '<path d="M2 12v138" stroke="#000" stroke-width="4"/><path d="M5 95l18-8.500v17z" fill="#999" stroke="#333" stroke-width="1.800"/>')}
              </div>
              <div class="row" style="width:180px;margin:13px 0 0 2px">${field(90, `0 ct${svg(12, 22, '<path d="M12 0v22L2 11z" fill="#999"/>')}`, '', 'gap:22px;justify-content:flex-end')}<span style="letter-spacing:.2px">0.00 dB</span></div>
            </div>
            <div class="line"></div>
            <div class="col" style="width:112px;padding-left:11px">
              <div class="row">${field(92, 'Warp', 'on', 'letter-spacing:.5px')}</div>
              <div class="row"></div>
              <div class="row" style="margin-top:4px;margin-bottom:4px"><span style="margin-left:2px;letter-spacing:.4px">Seg. BPM</span></div>
              <div class="row">${field(92, '130.00', '', 'letter-spacing:.3px')}</div>
              <div class="row" style="width:94px;margin-bottom:16px">${field(42, ':2', 'pill')}${field(44, '*2', 'pill')}</div>
              <div class="row">${field(94, 'Beats<i style="flex:1"></i>' + arrow, 'left')}</div>
              <div class="row" style="margin:4px 0 4px"><span style="margin-left:7px;letter-spacing:.45px">Preserve</span></div>
              <div class="row">${field(94, 'Transie<i style="flex:1"></i>' + arrow, 'left')}</div>
              <div class="row" style="width:92px">${field(46, svg(18, 18, '<path d="M0 5h12M6 13h12" stroke="#111" stroke-width="2.500"/><path d="M11 0l7 5-7 5zM7 8v10l-7-5z" fill="#111"/>') + arrow)}${field(42, '100', '', 'background:#e07a35')}</div>
            </div>
            <div class="line"></div>
            <div class="col" style="width:131px;padding-left:8px">
              ${label('Start')}${boxes(1, 1, 1)}
              ${label('End')}${boxes(2, 1, 1, 'flat')}
              <div style="height:4px;margin:10px 0 12px;background:#5a5a5a;flex:none"></div>
              <div class="row">${field(123, 'Loop', 'on', 'letter-spacing:.4px')}</div>
              ${label('Position')}${boxes(1, 1, 1)}
              ${label('Length')}${boxes(1, 0, 0)}
            </div>
          </div>`;
      }
    }

    // Column heights of one hit: [offset, above the zero line, below it]
    const HITS = {
      big: [[-2, 54, 34], [0, 62, 50], [2, 50, 62], [4, 40, 30], [6, 34, 28], [8, 14, 12], [10, 11, 12], [12, 12, 14], [14, 12, 12], [16, 8, 10], [18, 7, 7], [20, 4, 6], [22, 6, 6], [24, 6, 4], [26, 5, 5], [28, 4, 4], [30, 4, 2]],
      mid: [[-2, 14, 32], [0, 30, 38], [2, 20, 14], [4, 12, 10], [6, 7, 6], [8, 5, 6], [10, 6, 3], [12, 5, 4], [14, 4, 3], [16, 4, 2], [18, 4, 2]],
      small: [[0, 14, 6], [2, 4, 6]],
      tiny: [[-2, 6, 2], [0, 6, 4], [2, 4, 6]],
    };
    const BEATS = [
      ['big', 1075], ['small', 1194], ['tiny', 1273], ['mid', 1392],
      ['big', 1514], ['small', 1633], ['tiny', 1712], ['mid', 1832],
      ['big', 1953], ['small', 2072], ['tiny', 2152], ['mid', 2271],
      ['big', 2392], ['small', 2511], ['tiny', 2591], ['mid', 2709],
    ];

    class WaveEditor extends LiveElement {
      css() { return ':host { display: block; width: 1781px; height: 372px; margin-left: 14px; overflow: hidden; }'; }
      html() {
        const L = 1074, R = 2847, step = (R - L) / 32;
        const rect = (x, y, w, h, f) => `<rect x="${x}" y="${y}" width="${w}" height="${h}" fill="${f}"/>`;
        let out = rect(1070, 1196, 1781, 372, '#8c8c8c') + rect(1072, 1198, 1777, 34, '#7d7d7d')
          + rect(1072, 1232, 1776, 2, '#252735') + rect(1072, 1234, 1776, 18, '#989898') + rect(1072, 1252, 1776, 2, '#252735')
          + rect(1072, 1254, 1776, 22, '#8b8b8b') + rect(1072, 1276, 1777, 2, '#5a5a5a') + rect(1072, 1278, 1777, 22, '#717171')
          + rect(1072, 1300, 1777, 12, '#5a5a5a');
        for (let b = 0; b < 4; b++) {
          out += rect(L + b * 8 * step - (b ? 0 : 2), 1312, 8 * step + 2, 254, b % 2 ? '#b3b3b3' : '#a8a8a8');
        }
        for (let i = 0; i <= 32; i++) {
          const x = Math.round(L + i * step) - 1;
          if (i && i < 32) out += rect(x, 1254, 2, 22, '#7f7f7f') + rect(x, 1278, 2, 22, '#6a6a6a') + rect(x, 1312, 2, 254, '#9c9c9c');
          out += i % 4 ? rect(x, 1230, 2, 2, '#333') : rect(x, 1220, 2, 12, '#444');
          if (i % 4 === 0 && i < 32) {
            const beat = i / 8 + 1;
            const name = i === 0 ? '1' : Number.isInteger(beat) ? `1.${beat}` : `1.${Math.floor(beat)}.3`;
            out += `<text x="${x + 10}" y="1227" font-family="Liberation Sans" font-size="19" letter-spacing=".5" fill="#2a2a2a">${name}</text>`;
          }
        }
        out += rect(1072, 1438, 1777, 2, '#5a5a5a');
        for (const c of [1374, 1500]) {
          out += rect(1072, c - 2, 1757, 4, '#252735') + rect(2829, c, 18, 2, '#252735');
          for (const [kind, x] of BEATS) {
            out += HITS[kind].map(([d, u, w]) => rect(x + d, c - u, 2, u + w, '#252735')).join('');
          }
        }
        for (const [kind, x] of BEATS.slice(1)) {
          const t = kind === 'big' ? x - 3 : x + 1;
          out += `<path d="M${t - 7} 1302h14l-7 9z" fill="#9a9a9a"/>`;
        }
        out += rect(2846, 1312, 2, 254, '#252735') + rect(1072, 1312, 2, 254, '#252735');
        for (const y of [1243, 1265]) {
          out += `<path d="M1074 ${y - 9}l14 9-14 9zM2847 ${y - 9}l-15 9 15 9" fill="#999" stroke="#454850" stroke-width="1.500"/>`;
        }
        out += `<rect x="1073" y="1279" width="10" height="22" fill="#ffc90c" stroke="#333" stroke-width="2"/>
          <rect x="2837" y="1279" width="10" height="22" fill="#ffc90c" stroke="#333" stroke-width="2"/>
          <path d="M1074 1303h7l-7 8z" fill="#b9835c"/>
          <text x="2847" y="1560" text-anchor="end" font-family="Liberation Sans" font-weight="700" font-size="36" letter-spacing="2.500" fill="#5c5c5c">1/32</text>`;
        return svg(1781, 372, out, '1070 1196 1781 372');
      }
    }

    class LiveDetail extends LiveElement {
      css() {
        return `
          :host { display: flex; gap: 16px; height: 400px; flex: none; padding-left: 16px; }
          .clip { display: flex; align-items: flex-start; width: 2432px; height: 400px; padding: 14px 0 0 14px; border-radius: 16px; background: #505050; }
        `;
      }
      html() {
        return '<info-view></info-view><div class="clip"><clip-box></clip-box><sample-box></sample-box><wave-editor></wave-editor></div>';
      }
    }

    /* ---------- status bar ---------- */

    class LiveStatus extends LiveElement {
      css() {
        return `
          :host { display: flex; align-items: flex-start; height: 76px; flex: none; padding-left: 16px; }
          .bar { width: 2186px; height: 44px; margin: 16px 0 0 16px; padding: 8px; border-radius: 10px; background: #5a5a5a; }
          .bar div { height: 28px; background: #8c8c8c; }
          .tab { position: relative; width: 416px; height: 60px; margin-left: 16px; padding: 18px 0 0 8px; border-radius: 0 0 10px 10px; background: #505050; }
          .tab::before, .tab::after { content: ""; position: absolute; top: 0; width: 10px; height: 10px; }
          .tab::before { left: -10px; background: radial-gradient(circle at 0 100%, #0000 9px, #505050 10px); }
          .tab::after { right: -10px; background: radial-gradient(circle at 100% 100%, #0000 9px, #505050 10px); }
          .name { width: 106px; height: 44px; margin: 16px 16px 0; padding-right: 6px; border-radius: 8px; background: #505050; font: bold 19px/46px "Liberation Sans", sans-serif; text-align: center; }
          edge-button { margin-top: 20px; }
        `;
      }
      html() {
        const beats = [2284, 2380, 2479, 2578];
        const row = (c, top, bottom) => `<path d="M2284 ${c}h392" stroke="#252735" stroke-width="4"/>` + beats.map((x, i) =>
          `${i ? `<path d="M${x} ${top}V${bottom}" stroke="#252735" stroke-width="3"/>` : ''}<path d="M${x} ${c - 3}h12M${x + 21} ${c - 3}h6M${x + 40} ${c - 3}h7M${x + 70} ${c - 3}h8" stroke="#252735" stroke-width="3"/><path d="M${x + 71} ${c - 8}v18" stroke="#252735" stroke-width="2"/>`).join('');
        return `
          <edge-button kind="up"></edge-button>
          <div class="bar"><div></div></div>
          <div class="tab">${svg(400, 40, `<rect x="2280" y="1600" width="400" height="40" fill="#000"/><rect x="2284" y="1604" width="394" height="32" fill="#b3b3b3"/><path d="M2284 1621h394" stroke="#5a5a5a" stroke-width="2"/>${row(1613, 1604, 1620)}${row(1629, 1622, 1636)}`, '2280 1600 400 40')}</div>
          <div class="name">1-Audio</div>
          <edge-button kind="up"></edge-button>`;
      }
    }

    /* ---------- dock ---------- */

    const label = (t, x, y, size, fill, extra = '') => `<text x="${x}" y="${y}" text-anchor="middle" font-family="Lato" font-size="${size}" fill="${fill}" ${extra}>${t}</text>`;
    const gear = Array.from({ length: 18 }, (_, i) => `<rect x="-3" y="-31" width="6" height="10" fill="#ddd" transform="rotate(${i * 20})"/>`).join('');
    const compass = (r) => `
      <circle r="${r}" fill="#d8d8d8" stroke="#555" stroke-width="${r / 14}"/><circle r="${r * .84}" fill="url(#gSky)" stroke="#f4f4f4" stroke-width="${r / 14}"/>
      <path d="M0 ${-r * .62}L${r * .1} ${-r * .1} ${r * .62} 0 ${r * .1} ${r * .1} 0 ${r * .62} ${-r * .1} ${r * .1} ${-r * .62} 0 ${-r * .1} ${-r * .1}z" fill="#d8efff"/>
      <path d="M${r * .38} ${-r * .62}L${r * .1} ${r * .08} ${-r * .12} ${-r * .06}z" fill="#ee5a2a"/><path d="M${-r * .38} ${r * .62}L${r * .1} ${r * .08} ${-r * .12} ${-r * .06}z" fill="#fff"/>`;

    const DOCK = {
      finder: `<rect x="11" y="16" width="82" height="68" fill="url(#gFinder)"/><path d="M60 16h33v68H63V60H46q0-26 14-44z" fill="#c3d2f1"/>
        <path d="M64 6Q47 30 47 56h15q-3 20 2 38" stroke="#111" stroke-width="4"/><path d="M25 62q26 18 54 0" stroke="#111" stroke-width="4"/><path d="M33 26v9M68 26v9" stroke="#111" stroke-width="4"/>`,
      launchpad: `<circle cx="52" cy="52" r="45" fill="url(#gSteel)" stroke="#999" stroke-width="2"/><path d="M52 52L20 21A45 45 0 0 1 44 8zM52 52l32 31a45 45 0 0 1-24 14z" fill="#fff" opacity=".25"/><path d="M76 27c-15 0-27 8-33 22l-12-1-8 12 10 2 9 10 4 10 10-9v-13c12-7 20-17 20-33z" fill="#3a3b3f"/><circle cx="61" cy="42" r="6" fill="#ddd"/><path d="M32 69q-14 4-13 16 11-1 16-12z" fill="#3a3b3f"/>`,
      mission: `<rect x="6" y="12" width="92" height="82" rx="9" fill="#47494f" stroke="#2b2c30" stroke-width="2"/><rect x="13" y="22" width="40" height="24" fill="#e8862a"/><circle cx="32" cy="32" r="4" fill="#ffe08a"/><path d="M13 36h40v10H13z" fill="#6b2d13"/><rect x="13" y="20" width="40" height="3" fill="#ddd"/><rect x="60" y="34" width="30" height="36" fill="#2f7a3a"/><path d="M61 62q4-16 14-18 10 0 14 14v8z" fill="#8fc62a"/><circle cx="73" cy="43" r="3" fill="#d8402a"/><path d="M60 32h30v3H60z" fill="#ddd"/><rect x="23" y="57" width="34" height="26" fill="#e9efe6"/><path d="M24 83q2-12 8-12t8 4q4-6 9-3t8 11z" fill="#a0528f"/><path d="M23 55h34v3H23z" fill="#ddd"/><circle cx="74" cy="73" r="5" fill="#9cc4dc"/><path d="M28 44h9v7h-9zM36 79h9v8h-9z" fill="#b9c4cc"/>`,
      safari: `<circle cx="43" cy="8" r="4" stroke="#777" stroke-width="2"/><g transform="translate(52 53)">${compass(43)}</g>${label('N', 47, 33, 11, '#e8f4ff', 'font-weight="700"')}${label('S', 55, 85, 11, '#e8f4ff', 'font-weight="700"')}`,
      mail: `<g transform="rotate(-8 52 52)"><rect x="15" y="12" width="72" height="80" fill="#fff" stroke="#fff" stroke-width="5" stroke-dasharray="4 3"/><rect x="20" y="17" width="62" height="70" fill="#7ea3df"/><path d="M45 20l3 3 2-3 3 4 3-2 3 24 5 10 10 6 10 16-6 1-6-2-4-8-8-6-4 4-6 10-6-1-4 4-2-6 6-8 3-12 2-10z" fill="#5b4630"/><path d="M51 28l3 20 8 12 12 12M54 60l-10 14" stroke="#a58860" stroke-width="2.500"/></g><g stroke="#6f83a5" stroke-width="1.500" opacity=".8"><circle cx="24" cy="74" r="20"/><circle cx="24" cy="74" r="14"/><path d="M50 82q20-6 42 2M50 90q20-6 42 2"/></g>`,
      contacts: `<g transform="translate(4 0)"><path d="M80 16l5 2v60l-7 6z" fill="#eee"/><path d="M9 14L72 5l13 80-66 13z" fill="#d9a55a"/><path d="M9 14l10-2 10 84-10 2z" fill="#63463a"/><path d="M20 12l52-7q4 0 4 4l7 70q0 4-4 5l-52 10z" fill="#dfb574"/><path d="M19 96l60-13" stroke="#eee" stroke-width="3"/>${label('@', 54, 62, 44, '#f6ead2')}</g>`,
      calendar: `<g transform="translate(3 0)"><path d="M8 18l68-13 18 71-74 21z" fill="#e9e9e9"/><path d="M8 18l68-13 7 26-69 15z" fill="#c4454a"/><path d="M14 46l69-15 9 40-20 12-54 8z" fill="#fafafa"/><path d="M20 97l74-21-3-7-30 14-43 8z" fill="#bbb"/><path d="M45 25l12-2M45 30l12-2M62 21l12-2M62 26l12-2" stroke="#e08a8c" stroke-width="2" stroke-dasharray="2 1"/><path d="M22 2v20M62-2v18" stroke="#bbb" stroke-width="4"/>${label('17', 50, 74, 40, '#111', 'font-weight="900" transform="rotate(-10 50 62)"')}${label('3.', 19, 41, 12, '#fff', 'font-weight="700"')}</g>`,
      reminders: `<path d="M12 14q-2-5 4-6l56-8 6 2 15 76q0 6-6 8l-62 11q-6 0-7-5z" fill="#222" transform="translate(0 6) scale(.98 .93)"/><path d="M12 16l60-8 14 70-61 13z" fill="#f4f4ee"/><path d="M15 34l60-9M18 53l60-10M22 72l59-12" stroke="#ccc" stroke-width="1.500"/><path d="M32 14l10 74" stroke="#e8b5b5"/><path d="M18 24l4 5 8-13M21 43l4 5 8-13M25 62l4 5 8-13M28 79l4 5 8-13" stroke="#222" stroke-width="2.800"/><path d="M42 24l24-3M45 43l24-4M49 61l22-4M52 78l26-6" stroke="#ccc" stroke-width="6"/>`,
      cubase: `<path d="M59 5L12 52l47 46 18-17Q36 52 75 22z" fill="#b3172b"/><path d="M59 5l16 17Q58 36 55 48q-20 6-43 4z" fill="#e3a2aa"/><circle cx="78" cy="51" r="14" fill="#b3172b"/><path d="M64 48a14 13 0 0 1 27 0q-14 5-27 0z" fill="#d77882"/>`,
      live: `<rect x="10" y="10" width="84" height="85" fill="#737373"/>${label('Live', 52, 66, 38, '#fff', 'stroke="#fff" stroke-width=".8"')}`,
      notes: `<g transform="translate(4 0)"><path d="M10 16L74 5l15 80-66 15z" fill="#f3ea94"/><path d="M10 16L73 5l1 13-63 12z" fill="#6a3d2e"/><g stroke="#77703c" stroke-width="1.800" stroke-dasharray="7 2 3 2 10 3"><path d="M22 38l38-9M23 45l44-10M25 52l40-9M26 59l32-8M29 68l44-10M31 75l42-9M32 82l44-10M35 89l26-6"/></g></g>`,
      messages: `<path d="M50 9c26 0 46 16 46 38 0 8-3 16-8 22L40 84q-12 12-26 9 10-6 6-20C10 67 5 58 5 48 5 26 25 9 50 9z" fill="url(#gBlue)" transform="scale(.96)"/><path d="M68 46c18 0 31 10 31 25 0 9-4 15-10 19q0 8 8 9-12 2-20-7l-9 1c-17 0-29-10-29-23s12-24 29-24z" fill="#e3eef8"/><g fill="#8fb3cd"><circle cx="56" cy="70" r="4"/><circle cx="69" cy="70" r="4"/><circle cx="82" cy="70" r="4"/></g>`,
      facetime: `<path d="M70 53l26-29v56L70 55z" fill="#c9c9c9"/><rect x="7" y="21" width="62" height="64" rx="11" fill="#d3d3d3" stroke="#aaa" stroke-width="1.500"/><circle cx="39" cy="52" r="24" fill="#26282e"/><circle cx="39" cy="52" r="18" fill="#1b3d68"/><circle cx="35" cy="45" r="9" fill="#4e86bd"/><circle cx="45" cy="61" r="5" fill="#6e9cd0"/>`,
      booth: `<rect x="5" y="3" width="72" height="96" fill="#f2f2f2" stroke="#999"/><rect x="5" y="3" width="72" height="10" fill="#aaa"/><rect x="8" y="14" width="65" height="60" fill="#d1150c"/><path d="M14 14v60M22 14v60M31 14v60M40 14v60M49 14v60M58 14v60M67 14v60" stroke="#8e0904" stroke-width="2.500"/><path d="M19 76h22M20 76l-5 22M40 76l5 22M30 76v22M17 88h26" stroke="#5f3a27" stroke-width="4"/><g transform="rotate(15 74 64)"><rect x="60" y="28" width="30" height="69" fill="#f6f6f6"/><path d="M63 31h24v19H63zM63 53h24v19H63zM63 75h24v19H63z" fill="#47201e"/><ellipse cx="75" cy="41" rx="6" ry="8" fill="#dfae98"/><ellipse cx="75" cy="63" rx="6" ry="8" fill="#dfae98"/><ellipse cx="75" cy="85" rx="6" ry="8" fill="#dfae98"/></g>`,
      itunes: `<circle cx="52" cy="52" r="45" fill="url(#gBlue2)" stroke="#dcdcdc" stroke-width="4"/><path d="M43 72V33l28-8v38" stroke="#eee" stroke-width="6"/><path d="M43 32l28-8v8l-28 8z" fill="#eee"/><ellipse cx="36" cy="73" rx="10" ry="8" fill="#eee"/><ellipse cx="64" cy="65" rx="10" ry="8" fill="#eee"/>`,
      appstore: `<circle cx="52" cy="52" r="43" fill="url(#gBlue2)" stroke="#dcdcdc" stroke-width="4"/><path d="M25 52h54v9H25z" fill="#f0f0f0"/><path d="M53 24L30 77M51 24l24 53" stroke="#f8f8f8" stroke-width="7"/><path d="M34 67l5 3M68 60l6-3" stroke="#2178c4" stroke-width="2"/>`,
      prefs: `<rect x="7" y="13" width="90" height="80" rx="2" fill="#c8c8c8" stroke="#eee" stroke-width="2"/><rect x="14" y="19" width="76" height="67" fill="#575757"/><g transform="translate(54 52)">${gear}<circle r="21" stroke="#d6d6d6" stroke-width="7"/><path d="M0 0V-22M0 0l19 12M0 0l-19 12" stroke="#d6d6d6" stroke-width="6"/><circle r="8" fill="#ddd"/></g><path d="M14 64q15 5 18 22H14zM90 64q-15 5-18 22h18z" fill="#bbb"/>`,
      tools: `<path d="M6 12l11-6 33 44-8 6z" fill="#3c3c3c"/><path d="M11 10l31 42" stroke="#999" stroke-width="2"/><path d="M66 64l28 32-12-1-24-28z" fill="#d8d8d8"/><path d="M94 8c6 16-2 28-17 31L18 94q-10 5-10-6l52-58C62 14 73 7 85 6L74 22l8 8z" fill="#c9c9c9"/><circle cx="52" cy="51" r="20" fill="#151515"/><g transform="translate(52 51)"><path d="M0 0V-15A15 15 0 0 1 13-7.500z" fill="#e8537c"/><path d="M0 0L13-7.500A15 15 0 0 1 13 7.500z" fill="#4ec2e4"/><path d="M0 0L13 7.500A15 15 0 0 1 0 15z" fill="#54c07a"/><path d="M0 0V15A15 15 0 0 1-13 7.500z" fill="#a9cf3c"/><path d="M0 0L-13 7.500A15 15 0 0 1-13-7.500z" fill="#f3c22c"/><path d="M0 0L-13-7.500A15 15 0 0 1 0-15z" fill="#ef7c45"/></g>`,
      page: `<rect x="5" y="21" width="94" height="62" fill="#f5f6f8"/><rect x="5" y="21" width="94" height="6" fill="#c8c8c8"/><rect x="5" y="27" width="94" height="18" fill="#dde3ee"/><rect x="24" y="29" width="54" height="9" fill="#fff"/><path d="M26 33h7M44 33h12" stroke="#345" stroke-width="3"/><circle cx="14" cy="39" r="3" fill="#d22"/><path d="M18 39h12" stroke="#a22" stroke-width="2"/><path d="M8 48h5M8 52h5M8 56h5M8 62h5M8 67h5M8 72h5" stroke="#77c" stroke-width="1.500"/><path d="M18 50h44M18 55h50M18 60h22M18 65h60M18 69h56M18 73h54M18 77h48" stroke="#999" stroke-width="1.200"/><g transform="translate(82 83)">${compass(16)}</g>`,
      trash: `<path d="M16 22h72l-7 68q-29 14-58 0z" fill="#26282a" opacity=".9"/><g stroke="#9a9c9e" stroke-width="1">${Array.from({ length: 8 }, (_, i) => `<path d="M${18 + i * 9} 26L${34 + i * 6} 90M${86 - i * 9} 26L${70 - i * 6} 90"/>`).join('')}<path d="M18 40q34 9 68 0M20 54q32 9 64 0M21 68q31 9 62 0"/></g><ellipse cx="52" cy="18" rx="35" ry="12" fill="#3c3e40" stroke="#d3d3d8" stroke-width="5"/><path d="M23 82q29 12 58 0l-1 11q-28 11-56 0z" fill="#cfcfd4"/>`,
    };

    class DockIcon extends LiveElement {
      css() {
        return `
          :host { display: flex; flex-direction: column; align-items: center; justify-content: space-between; width: 104px; height: 128px; flex: none; }
          .icon { filter: drop-shadow(0 3px 3px rgba(0,0,0,.45)); }
          i { width: 22px; height: 7px; background: #f4fcff; box-shadow: 0 0 12px 5px #7cc5ec; }
        `;
      }
      html() {
        const grad = (id, a, b, r = 90) => `<linearGradient id="${id}" gradientTransform="rotate(${r})"><stop stop-color="${a}"/><stop offset="1" stop-color="${b}"/></linearGradient>`;
        const defs = `<defs>${grad('gFinder', '#a9c8f2', '#4a74c6')}${grad('gSteel', '#e4e4e4', '#999', 45)}${grad('gSky', '#4f8fd0', '#3bb4ee')}${grad('gBlue', '#5fb0f4', '#58cdf6')}${grad('gBlue2', '#2f6cba', '#27b4f2')}</defs>`;
        return `<div class="icon">${svg(104, 104, defs + DOCK[this.getAttribute('name')])}</div>${this.hasAttribute('running') ? '<i></i>' : ''}`;
      }
    }

    class MacDock extends LiveElement {
      css() {
        return `
          :host { display: grid; height: 142px; flex: none; }
          svg, .icons { grid-area: 1 / 1; }
          .icons { display: flex; padding: 14px 0 0 378px; }
          .sep { width: 52px; height: 128px; flex: none; }
        `;
      }
      html() {
        // Stars scattered over the strip of wallpaper below the window
        let seed = 7;
        const rnd = () => (seed = (seed * 16807) % 2147483647) / 2147483647;
        let stars = '';
        for (let i = 0; i < 130; i++) {
          stars += `<circle cx="${(rnd() * 2880).toFixed(0)}" cy="${(1660 + rnd() * 138).toFixed(0)}" r="${(0.8 + rnd() * 1.4).toFixed(1)}" fill="#8fa3b3" opacity="${(0.25 + rnd() * 0.5).toFixed(2)}"/>`;
        }
        const sky = `${stars}<circle cx="1466" cy="1671" r="6" fill="#a09c94"/><path d="M1466 1660v24M1455 1671h22" stroke="#a09c94" opacity=".5" stroke-width="1.500"/><circle cx="847" cy="1674" r="3.500" fill="#9c9c98"/><circle cx="2423" cy="1674" r="3.500" fill="#9c9c98"/>`;
        // Tint of each icon mirrored in the shelf
        const tints = [[430, '#6f9ae6'], [742, '#7cc9ee'], [950, '#e3b877'], [1263, '#e0566a'], [1470, '#e8e08a'], [1560, '#7cd0ee'], [1886, '#3fa8dc'], [1990, '#3fc4dc'], [2374, '#7cc9ee']];
        const shelf = `<defs><linearGradient id="s" x2="0" y2="1"><stop stop-color="#757a80"/><stop offset=".5" stop-color="#a2a5a9"/><stop offset="1" stop-color="#c6c8cc"/></linearGradient>
            <filter id="b"><feGaussianBlur stdDeviation="6"/></filter></defs>
          <path d="M382 1718H2498q6 0 8 6l42 69H333l40-69q3-6 9-6z" fill="url(#s)"/>
          <g filter="url(#b)" opacity=".45">${tints.map(([x, c]) => `<ellipse cx="${x}" cy="1782" rx="28" ry="8" fill="${c}"/>`).join('')}</g>
          <path d="M333 1793h2215v7H333z" fill="#96989b"/><path d="M333 1793h2215" stroke="#fff" stroke-width="2.500"/>
          <path d="M2265 1726l21 58" stroke="#777a7e" stroke-width="3"/>`;
        const names = ['finder', 'launchpad', 'mission', 'safari', 'mail', 'contacts', 'calendar', 'reminders', 'cubase', 'live', 'notes', 'messages', 'facetime', 'booth', 'itunes', 'appstore', 'prefs', 'tools'];
        const running = ['finder', 'safari', 'live', 'itunes', 'tools'];
        const icon = n => `<dock-icon name="${n}" ${running.includes(n) ? 'running' : ''}></dock-icon>`;
        return `${svg(2880, 142, sky + shelf, '0 1658 2880 142')}
          <div class="icons">${names.map(icon).join('')}<div class="sep"></div>${icon('page')}${icon('trash')}</div>`;
      }
    }

    customElements.define('tool-box', ToolBox);
    customElements.define('edge-button', EdgeButton);
    customElements.define('browser-row', BrowserRow);
    customElements.define('track-meter', TrackMeter);
    customElements.define('track-strip', TrackStrip);
    customElements.define('drop-area', DropArea);
    customElements.define('live-field', LiveField);
    customElements.define('info-view', InfoView);
    customElements.define('clip-box', ClipBox);
    customElements.define('sample-box', SampleBox);
    customElements.define('wave-editor', WaveEditor);
    customElements.define('live-browser', LiveBrowser);
    customElements.define('live-session', LiveSession);
    customElements.define('live-toolbar', LiveToolbar);
    customElements.define('live-main', LiveMain);
    customElements.define('live-detail', LiveDetail);
    customElements.define('live-status', LiveStatus);
    customElements.define('live-window', LiveWindow);
    customElements.define('dock-icon', DockIcon);
    customElements.define('mac-dock', MacDock);
    customElements.define('mac-menubar', MacMenubar);
    customElements.define('mac-desktop', MacDesktop);
  </script>
</body>
</html>
